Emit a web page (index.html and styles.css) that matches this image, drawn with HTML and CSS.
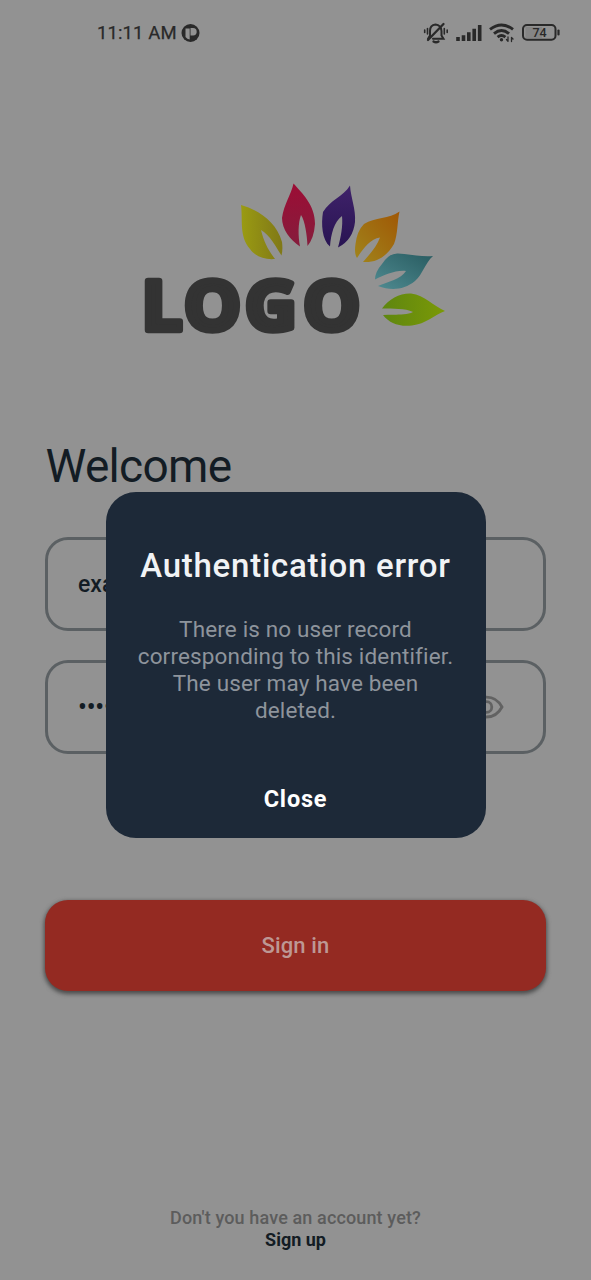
FILE: index.html
```html
<!DOCTYPE html>
<html lang="en">
<head>
<meta charset="utf-8">
<title>Sign in</title>
<link rel="stylesheet" href="styles.css">
</head>
<body>
<main class="screen">
  <header class="status">
    <span class="clock">11:11 AM</span>
    <svg class="app-dot" width="19" height="19" viewBox="0 0 19 19"><circle cx="9.5" cy="9" r="9" fill="#292929"/><path d="M4.500 4.500H8.700V15.500A6.500 6.500 0 0 1 4.500 13Z" fill="#929292"/><path d="M9.500 4H12A3.700 3.700 0 0 1 12 11.400H9.500Z" fill="#929292"/></svg>
    <svg class="status-icons" width="138" height="24" viewBox="423 21 138 24" fill="none" stroke="#292929" stroke-width="2" stroke-linecap="round">
      <path d="M428 38.800L430 35.500V31Q430 25 435.500 24.500Q441 25 441.500 31V35.500L443.500 38.800H433"/><path d="M428 40L443.500 24" stroke-width="2.300"/><path d="M433.500 41.500Q436 43 438.500 41.500" stroke-width="2.300"/><path d="M427.500 28.500V34M424.700 30V32.500M444.300 28.500V34M447.200 30V32.500" stroke-width="1.600"/>
      <path d="M458 37V41M463.500 35.200V41M468.800 32.200V41M474.200 28.700V41M479.700 25V41" stroke-width="3.600" stroke-linecap="butt"/>
      <path d="M490 29.300Q501.500 20.500 513 29.300M494 33.600Q501.500 27.500 509 33.600M497.600 37.200Q501.500 34 505.400 37.200" stroke-width="2.900" stroke-linecap="butt"/><circle cx="501.500" cy="39.700" r="1.700" fill="#292929" stroke="none"/><path d="M508 37V41M506.500 39.500L508 41.300M511.500 41.500V37.500M511.500 37.500L513 39" stroke-width="1.300"/>
      <rect x="523" y="25" width="32.500" height="14.800" rx="4"/><path d="M525.500 27H542V38H525.500Z" fill="#858585" stroke="none"/><path d="M558.500 30.500V34.500" stroke-width="2.200"/>
      <text class="battery" x="539.500" y="37" text-anchor="middle">74</text>
    </svg>
  </header>

  <svg class="logo" width="310" height="160" viewBox="140 180 310 160">
    <defs>
      <linearGradient id="lime" x1="0" x2="1"><stop offset="0" stop-color="#9a9b12"/><stop offset="1" stop-color="#807817"/></linearGradient>
      <linearGradient id="red" x1="0" x2="0" y1="0" y2="1"><stop offset="0" stop-color="#9c0d35"/><stop offset="1" stop-color="#851d3c"/></linearGradient>
      <linearGradient id="violet" x1="0" x2="0" y1="0" y2="1"><stop offset="0" stop-color="#3f226a"/><stop offset="1" stop-color="#281452"/></linearGradient>
      <linearGradient id="amber" x1="1" x2="0" y1="0" y2="1"><stop offset="0" stop-color="#a05705"/><stop offset="1" stop-color="#a0851c"/></linearGradient>
      <linearGradient id="teal" x1="1" x2="0" y1="0" y2="1"><stop offset="0" stop-color="#285b60"/><stop offset="1" stop-color="#4f8b91"/></linearGradient>
      <linearGradient id="green" x1="0" x2="1"><stop offset="0" stop-color="#5e8610"/><stop offset="1" stop-color="#7b9907"/></linearGradient>
    </defs>
    <path fill="url(#lime)" d="M241 205C258 210 276 221 282 242Q283 250 281.500 255.500C276 247 270 235 261 230C264 243 269 251 275 259C264 260 255 256 250 249C239 236 243 221 241 205Z"/>
    <path fill="url(#red)" d="M293.500 183.500C302 193 315 205 315 224Q314 238 307.500 246C307 235 305 221 301 215C298 223 298 236 300 246.500C290 240 282 229 282 218C284 204 291 195 293.500 183.500Z"/>
    <path fill="url(#violet)" d="M350 185.500C351 199 356 209 355 222Q353 240 338 247.500C341 237 343 226 342 216C334 222 331 234 330 246.500C322 240 321 224 323 212C330 200 343 197 350 185.500Z"/>
    <path fill="url(#amber)" d="M399.500 211.500C397 223 398 234 394 244C387 256 377 263 363 262C370 254 377 246 380 237.500C370 239 363 249 357 258Q354 254 355.500 244Q357 231 364 224C375 217 389 219 399.500 211.500Z"/>
    <path fill="url(#teal)" d="M433 256C425 263 423 274 415 281C404 290 391 291 378 286C388 282 401 279 406 271C395 270 385 275 375 279.500Q375 272 382 264Q389 253 398 253.500C410 254 421 257 433 256Z"/>
    <path fill="url(#green)" d="M445 311C434 315 426 324 412 325.500C399 327 389 323 383 315C393 314 405 316 413 312C405 308 393 309 382 308.500C389 299 400 293 411 293.500C425 295 433 306 445 311Z"/>
    <text class="wordmark" transform="scale(1.05 1)" x="135.100 175.200 233.300 288.700" y="330.500">LOGO</text>
  </svg>

  <h1 class="welcome">Welcome</h1>
  <form class="form">
    <div class="field"><span>example</span></div>
    <div class="field"><span class="dots">••••••</span>
      <svg width="35" height="24" viewBox="0 0 35 24" fill="none" stroke="#626262" stroke-width="2.800"><path d="M2 12C9 -1.300 26 -1.300 33 12C26 25.300 9 25.300 2 12Z"/><circle cx="17.500" cy="12" r="5.300"/></svg>
    </div>
    <button type="button" class="signin">Sign in</button>
  </form>
  <footer class="footer"><span>Don't you have an account yet?</span><strong>Sign up</strong></footer>

  <div class="overlay">
    <section class="dialog">
      <h2>Authentication error</h2>
      <p>There is no user record<br>corresponding to this identifier.<br>The user may have been<br>deleted.</p>
      <button type="button" class="close">Close</button>
    </section>
  </div>
</main>
</body>
</html>
```
FILE: styles.css
```css
* { box-sizing: border-box; }
body { margin: 0; background: #929292; font-family: Roboto, sans-serif; }
button { border: 0; font-family: inherit; padding: 0; }
.screen { position: relative; width: 591px; height: 1280px; overflow: hidden; display: flex; flex-direction: column; background: #929292; }
.status { height: 66px; padding: 0 30px 0 97px; display: flex; align-items: center; color: #292929; }
.clock { font-size: 18.5px; font-weight: 400; letter-spacing: .1px; -webkit-text-stroke: .25px #292929; width: 84px; white-space: nowrap; }
.app-dot { flex: none; }
.status-icons { margin-left: auto; }
.battery { font: 500 12.5px Roboto, sans-serif; fill: #292929; stroke: none; }
.logo { margin: 114px 0 0 140px; overflow: visible; }
.wordmark { font: 700 68px "Open Sans", sans-serif; fill: #333; stroke: #333; stroke-width: 6.5px; stroke-linejoin: round; }
.welcome { margin: 99px 0 0 45.5px; height: 54px; line-height: 54px; font-size: 46px; font-weight: 400; letter-spacing: -.7px; color: #131c24; }
.form { margin: 44px 45px 0; display: flex; flex-direction: column; }
.field { height: 94px; border: 3px solid #5b6063; border-radius: 23px; padding: 0 39px 0 30px; margin-bottom: 29px; display: flex; align-items: center; justify-content: space-between; font-size: 23px; font-weight: 500; color: #131c24; }
.dots { font-size: 25px; letter-spacing: -.1px; }
.signin { margin-top: 117px; height: 91px; border-radius: 23px; background: #942a22; color: #bd9894; font-size: 22px; font-weight: 500; letter-spacing: .15px; box-shadow: 0 2px 4px 1px #4b4b4b; }
.footer { margin-top: auto; padding-bottom: 30px; display: flex; flex-direction: column; align-items: center; font-size: 18px; line-height: 21.5px; font-weight: 500; color: #5c5c5c; }
.footer span { letter-spacing: .13px; }
.footer strong { color: #131c24; font-weight: 700; }
.overlay { position: absolute; inset: 0; display: flex; justify-content: center; padding-top: 491.5px; }
.dialog { width: 380px; height: 346px; border-radius: 30px; background: #1d2938; display: flex; flex-direction: column; align-items: center; text-align: center; }
.dialog h2 { margin: 54px 0 0; font-size: 33px; line-height: 40px; font-weight: 500; color: #f1f3f5; letter-spacing: .75px; white-space: nowrap; }
.dialog p { margin: 30px 0 0; font-size: 22.5px; line-height: 27px; letter-spacing: .15px; color: #8e949c; white-space: nowrap; }
.close { margin-top: 60px; height: 30px; background: transparent; color: #fff; font-size: 23.5px; font-weight: 700; letter-spacing: .8px; }
```
